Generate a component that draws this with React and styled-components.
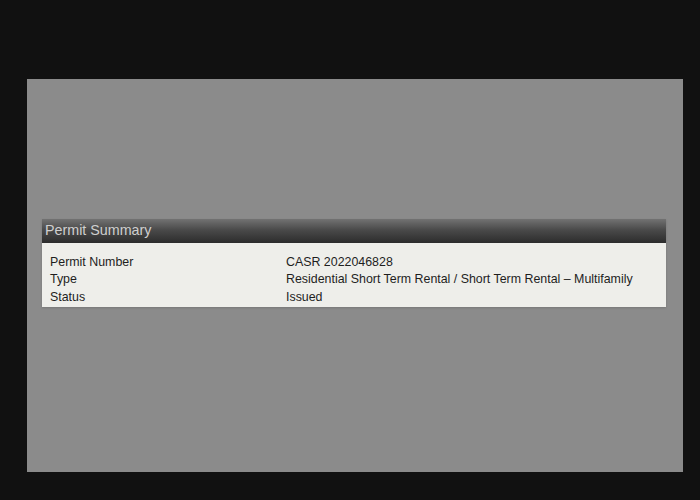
import React from 'react';
import styled, { createGlobalStyle } from 'styled-components';

const Global = createGlobalStyle`
  html, body {
    margin: 0;
    padding: 0;
    background: #111111;
  }
  body {
    font-family: "Liberation Sans", Arial, sans-serif;
  }
`;

const Screen = styled.div`
  width: 700px;
  height: 500px;
  background: #111111;
  padding: 79px 17px 28px 27px;
  box-sizing: border-box;
`;

const Stage = styled.div`
  width: 100%;
  height: 100%;
  background: #8b8b8b;
  display: flex;
  flex-direction: column;
  padding: 140px 17px 0 15px;
  box-sizing: border-box;
`;

const Panel = styled.div`
  display: flex;
  flex-direction: column;
  box-shadow: 0 1px 2px rgba(0, 0, 0, 0.15);
`;

const Header = styled.div`
  height: 24px;
  background: linear-gradient(to bottom, #727272 0%, #4a4a4a 45%, #2c2c2c 100%);
  color: #cfcfcf;
  font-size: 14.3px;
  line-height: 22px;
  padding-left: 3px;
`;

const Body = styled.div`
  background: #eeeeea;
  padding: 10px 8px 1px 8px;
  display: grid;
  grid-template-columns: 236px 1fr;
  grid-auto-rows: 17.5px;
  font-size: 12.4px;
  color: #1e1e1e;
  align-items: center;
`;

const Cell = styled.span`
  white-space: nowrap;
`;

const rows = [
  ['Permit Number', 'CASR 2022046828'],
  ['Type', 'Residential Short Term Rental / Short Term Rental – Multifamily'],
  ['Status', 'Issued'],
];

export default function App() {
  return (
    <>
      <Global />
      <Screen>
        <Stage>
          <Panel>
            <Header>Permit Summary</Header>
            <Body>
              {rows.map(([k, v]) => (
                <React.Fragment key={k}>
                  <Cell>{k}</Cell>
                  <Cell>{v}</Cell>
                </React.Fragment>
              ))}
            </Body>
          </Panel>
        </Stage>
      </Screen>
    </>
  );
}
